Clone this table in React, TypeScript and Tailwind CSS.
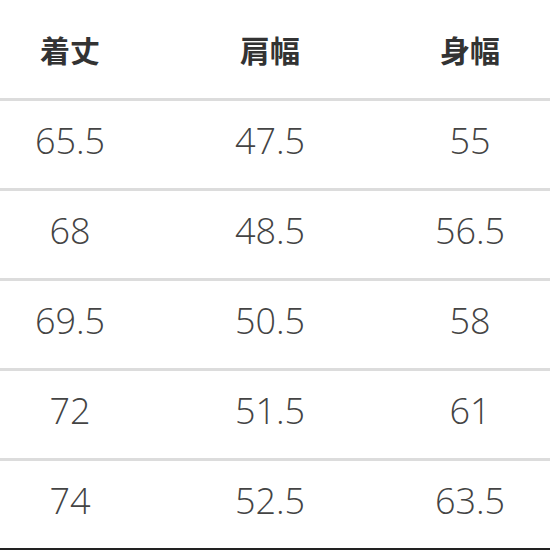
const headers = ["着丈", "肩幅", "身幅"];

const rows = [
  ["65.5", "47.5", "55"],
  ["68", "48.5", "56.5"],
  ["69.5", "50.5", "58"],
  ["72", "51.5", "61"],
  ["74", "52.5", "63.5"],
];

export default function App() {
  return (
    <div className="w-[550px] h-[550px] overflow-hidden bg-white">
      <div className="grid grid-cols-[140px_260px_140px] h-[101px] items-center border-b-[3px] border-[#dcdcdc] font-['Noto_Sans_CJK_JP',sans-serif] text-[30px] font-bold text-[#333]">
        {headers.map((h) => (
          <div key={h} className="text-center leading-none">
            {h}
          </div>
        ))}
      </div>
      {rows.map((r, i) => (
        <div
          key={i}
          className={
            i === rows.length - 1
              ? "grid grid-cols-[140px_260px_140px] h-[89px] items-center border-b-2 border-[#222] font-['Open_Sans',sans-serif] font-light text-[36px] text-[#444]"
              : "grid grid-cols-[140px_260px_140px] h-[90px] items-center border-b-[3px] border-[#dcdcdc] font-['Open_Sans',sans-serif] font-light text-[36px] text-[#444]"
          }
        >
          {r.map((v, j) => (
            <div key={j} className="text-center leading-none pb-[8px]">
              {v}
            </div>
          ))}
        </div>
      ))}
    </div>
  );
}
